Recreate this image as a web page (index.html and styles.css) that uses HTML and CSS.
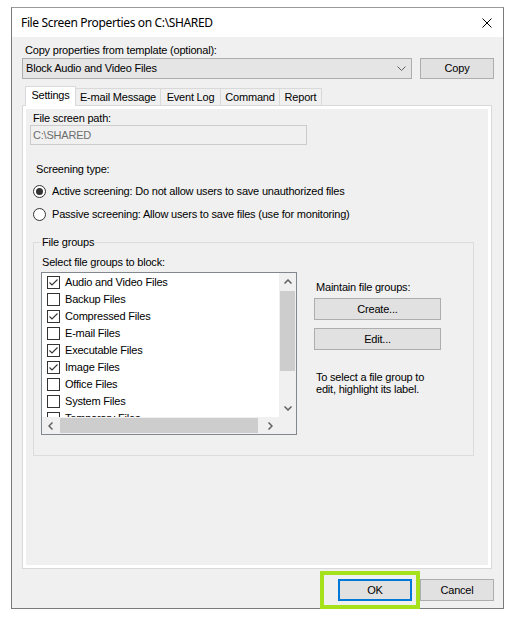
FILE: index.html
```html
<!DOCTYPE html>
<html>
<head>
<meta charset="utf-8">
<title>File Screen Properties</title>
<link rel="stylesheet" href="styles.css">
</head>
<body>
<div class="window">
  <div class="titlebar">
    <span class="title">File Screen Properties on C:\SHARED</span>
    <svg class="close" width="10" height="10" viewBox="0 0 10 10"><path d="M0.5 0.5L9.5 9.5M9.5 0.5L0.5 9.5" stroke="#000" stroke-width="1"/></svg>
  </div>
  <div class="client">
    <div class="tpl-label">Copy properties from template (optional):</div>
    <div class="tpl-row">
      <div class="combo">
        <span>Block Audio and Video Files</span>
        <svg class="chev" width="9" height="5" viewBox="0 0 9 5"><path d="M0.5 0.5L4.5 4.5L8.5 0.5" fill="none" stroke="#606060" stroke-width="1"/></svg>
      </div>
      <div class="btn copy">Copy</div>
    </div>
    <div class="tabs">
      <div class="tab sel w-settings">Settings</div>
      <div class="tab w-email">E-mail Message</div>
      <div class="tab w-event">Event Log</div>
      <div class="tab w-command">Command</div>
      <div class="tab w-report">Report</div>
    </div>
    <div class="pane">
      <div class="page">
        <div class="fs-label">File screen path:</div>
        <div class="path-input">C:\SHARED</div>
        <div class="screen-label">Screening type:</div>
        <div class="radio-row first">
          <span class="radio on"></span>
          <span>Active screening: Do not allow users to save unauthorized files</span>
        </div>
        <div class="radio-row">
          <span class="radio"></span>
          <span>Passive screening: Allow users to save files (use for monitoring)</span>
        </div>
        <div class="group">
          <div class="group-title">File groups</div>
          <div class="select-label">Select file groups to block:</div>
          <div class="group-body">
            <div class="listbox">
              <div class="items">
                <div class="item"><span class="cb on"><svg width="11" height="11" viewBox="0 0 11 11"><path d="M1.5 5.5L4 8L9.5 2.5" fill="none" stroke="#333" stroke-width="1.1"/></svg></span>Audio and Video Files</div>
                <div class="item"><span class="cb"></span>Backup Files</div>
                <div class="item"><span class="cb on"><svg width="11" height="11" viewBox="0 0 11 11"><path d="M1.5 5.5L4 8L9.5 2.5" fill="none" stroke="#333" stroke-width="1.1"/></svg></span>Compressed Files</div>
                <div class="item"><span class="cb"></span>E-mail Files</div>
                <div class="item"><span class="cb on"><svg width="11" height="11" viewBox="0 0 11 11"><path d="M1.5 5.5L4 8L9.5 2.5" fill="none" stroke="#333" stroke-width="1.1"/></svg></span>Executable Files</div>
                <div class="item"><span class="cb on"><svg width="11" height="11" viewBox="0 0 11 11"><path d="M1.5 5.5L4 8L9.5 2.5" fill="none" stroke="#333" stroke-width="1.1"/></svg></span>Image Files</div>
                <div class="item"><span class="cb"></span>Office Files</div>
                <div class="item"><span class="cb"></span>System Files</div>
                <div class="item"><span class="cb"></span>Temporary Files</div>
              </div>
              <div class="vscroll">
                <div class="arrow"><svg width="8" height="5" viewBox="0 0 8 5"><path d="M0.5 4.5L4 1L7.5 4.5" fill="none" stroke="#606060" stroke-width="1.5"/></svg></div>
                <div class="vtrack"><div class="vthumb"></div></div>
                <div class="arrow"><svg width="8" height="5" viewBox="0 0 8 5"><path d="M0.5 0.5L4 4L7.5 0.5" fill="none" stroke="#606060" stroke-width="1.5"/></svg></div>
              </div>
              <div class="hscroll">
                <div class="arrow"><svg width="5" height="8" viewBox="0 0 5 8"><path d="M4.5 0.5L1 4L4.5 7.5" fill="none" stroke="#606060" stroke-width="1.5"/></svg></div>
                <div class="htrack"><div class="hthumb"></div></div>
                <div class="arrow"><svg width="5" height="8" viewBox="0 0 5 8"><path d="M0.5 0.5L4 4L0.5 7.5" fill="none" stroke="#606060" stroke-width="1.5"/></svg></div>
              </div>
              <div class="corner"></div>
            </div>
            <div class="side">
              <div class="maintain">Maintain file groups:</div>
              <div class="btn side-btn create">Create...</div>
              <div class="btn side-btn edit">Edit...</div>
              <div class="hint">To select a file group to<br>edit, highlight its label.</div>
            </div>
          </div>
        </div>
      </div>
    </div>
    <div class="footer">
      <div class="btn ok">OK</div>
      <div class="btn cancel">Cancel</div>
    </div>
  </div>
</div>
<div class="highlight"></div>
</body>
</html>
```

FILE: styles.css
```css
* { box-sizing: border-box; }
html, body { margin: 0; padding: 0; background: #fff; }
body {
  font-family: "Liberation Sans", Arial, sans-serif;
  font-size: 11px;
  line-height: 13px;
  letter-spacing: -0.2px;
  color: #000;
  position: relative;
  width: 514px;
  height: 623px;
  overflow: hidden;
}
.window {
  margin: 7px 0 0 11px;
  width: 493px;
  height: 602px;
  border: 1px solid #7a7a7a;
  border-top-color: #9a9a9a;
  display: flex;
  flex-direction: column;
  background: #f0f0f0;
}
.titlebar {
  height: 29px;
  flex: none;
  background: #fff;
  display: flex;
  align-items: center;
  justify-content: space-between;
  padding: 0 11px 0 9px;
}
.title {
  font-family: "Noto Sans", "Open Sans", sans-serif;
  font-size: 12px;
  letter-spacing: -0.35px;
  line-height: 16px;
  padding-top: 1px;
}
.close { display: block; margin-top: 1px; }
.client {
  flex: 1;
  display: flex;
  flex-direction: column;
  padding: 7px 9px 7px 10px;
}
.tpl-label { padding-left: 3px; height: 13px; }
.tpl-row {
  margin-top: 1px;
  display: flex;
  gap: 8px;
  height: 21px;
}
.combo {
  width: 390px;
  height: 21px;
  border: 1px solid #adadad;
  background: #e5e5e5;
  display: flex;
  align-items: center;
  justify-content: space-between;
  padding: 0 5px 0 3px;
}
.chev { display: block; }
.btn {
  height: 21px;
  border: 1px solid #adadad;
  background: #e1e1e1;
  display: flex;
  align-items: center;
  justify-content: center;
}
.copy { width: 74px; }
.tabs {
  margin-top: 7px;
  height: 19px;
  display: flex;
  align-items: flex-end;
  padding-left: 3px;
}
.tab {
  height: 17px;
  border: 1px solid #d9d9d9;
  border-bottom: none;
  background: #f0f0f0;
  margin-left: -1px;
  text-align: center;
  line-height: 16px;
}
.tab.sel {
  height: 20px;
  margin-left: 0;
  margin-bottom: -1px;
  background: #fff;
  position: relative;
  z-index: 1;
  line-height: 17px;
}
.w-settings { width: 51px; }
.w-email { width: 86px; }
.w-event { width: 61px; }
.w-command { width: 60px; }
.w-report { width: 43px; }
.pane {
  flex: 1;
  margin-right: 2px;
  border: 1px solid #d9d9d9;
  background: #fff;
  padding: 3px;
  display: flex;
}
.page {
  flex: 1;
  background: #f0f0f0;
  padding-top: 3px;
}
.fs-label { padding-left: 7px; }
.path-input {
  margin-left: 4px;
  width: 277px;
  height: 20px;
  border: 1px solid #cccccc;
  padding-left: 2px;
  line-height: 18px;
  color: #6d6d6d;
}
.screen-label { margin-top: 18px; padding-left: 10px; }
.radio-row {
  display: flex;
  align-items: center;
  gap: 6px;
  height: 13px;
  margin-top: 10px;
  padding-left: 7px;
}
.radio-row.first { margin-top: 9px; }
.radio {
  width: 13px;
  height: 13px;
  border: 1px solid #333;
  border-radius: 50%;
  background: #fff;
  display: flex;
  align-items: center;
  justify-content: center;
  flex: none;
}
.radio.on::after {
  content: "";
  width: 7px;
  height: 7px;
  border-radius: 50%;
  background: #333;
}
.group {
  margin-top: 21px;
  margin-left: 7px;
  width: 441px;
  height: 214px;
  border: 1px solid #dcdcdc;
}
.group-title {
  width: max-content;
  margin-top: -7px;
  margin-left: 7px;
  padding: 0 1px;
  background: #f0f0f0;
}
.select-label { margin-top: 7px; padding-left: 8px; }
.group-body {
  display: flex;
  margin-top: 3px;
  padding-left: 7px;
}
.listbox {
  width: 256px;
  height: 163px;
  border: 1px solid #828790;
  background: #fff;
  display: grid;
  grid-template-columns: 1fr 17px;
  grid-template-rows: 1fr 17px;
  flex: none;
}
.items {
  overflow: hidden;
  padding-top: 1px;
}
.item {
  height: 17px;
  display: flex;
  align-items: center;
  padding-left: 5px;
  gap: 5px;
  white-space: nowrap;
}
.cb {
  width: 13px;
  height: 13px;
  border: 1px solid #333;
  background: #fff;
  flex: none;
  display: flex;
  align-items: center;
  justify-content: center;
}
.cb svg { display: block; }
.vscroll {
  grid-row: 1;
  grid-column: 2;
  background: #f0f0f0;
  display: flex;
  flex-direction: column;
}
.vscroll .arrow {
  height: 17px;
  flex: none;
  display: flex;
  align-items: center;
  justify-content: center;
}
.vtrack { flex: 1; padding: 1px 1px 0 1px; }
.vthumb { height: 80px; background: #cdcdcd; }
.hscroll {
  grid-row: 2;
  grid-column: 1;
  background: #f0f0f0;
  display: flex;
}
.hscroll .arrow {
  width: 17px;
  flex: none;
  display: flex;
  align-items: center;
  justify-content: center;
}
.htrack { flex: 1; padding: 1px 0 1px 1px; }
.hthumb { width: 198px; height: 100%; background: #cdcdcd; }
.corner { grid-row: 2; grid-column: 2; background: #f0f0f0; }
.arrow svg { display: block; }
.side { margin-left: 17px; width: 127px; }
.maintain { margin-top: 9px; padding-left: 2px; }
.side-btn { width: 127px; height: 22px; }
.create { margin-top: 4px; }
.edit { margin-top: 8px; }
.hint { margin-top: 21px; padding-left: 2px; line-height: 12px; }
.footer {
  margin-top: 10px;
  display: flex;
  justify-content: flex-end;
  gap: 8px;
}
.footer .btn { width: 74px; height: 22px; }
.ok { border: 2px solid #0078d7; }
.highlight {
  position: absolute;
  left: 320px;
  top: 571px;
  width: 100px;
  height: 38px;
  border: 4px solid #a6e21c;
}
```
